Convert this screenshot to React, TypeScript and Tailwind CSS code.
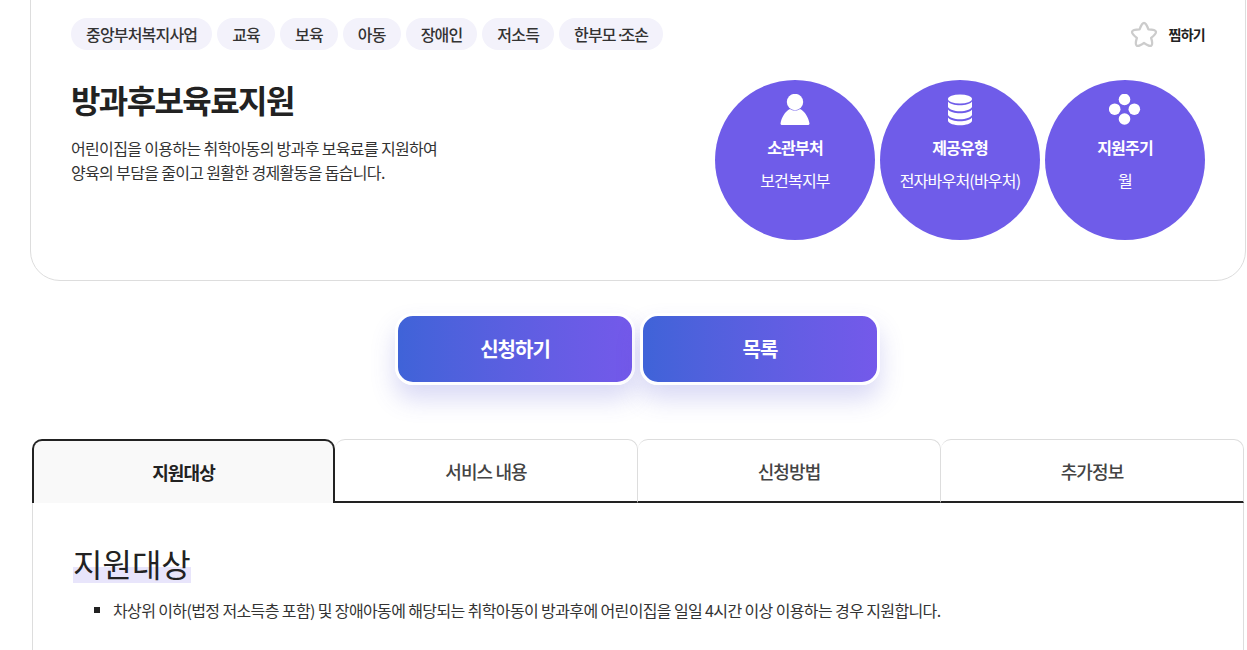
import React from 'react';

const chips: React.ReactNode[] = [
  '중앙부처복지사업',
  '교육',
  '보육',
  '아동',
  '장애인',
  '저소득',
  <>
    한부모<span className="tracking-[-4.5px]">·</span>조손
  </>,
];
const tabs = ['지원대상', '서비스 내용', '신청방법', '추가정보'];

const StarIcon = () => (
  <svg width="28" height="28" viewBox="0 0 28 28" fill="none" stroke="#cccccc" strokeWidth="2.3" strokeLinejoin="round">
    <path d="M9.59 9.43Q14-3.43 18.41 9.43 32 9.65 21.13 17.82 25.13 30.81 14 23 2.87 30.81 6.87 17.82-4 9.65 9.59 9.43z" />
  </svg>
);

const PersonIcon = () => (
  <svg width="32" height="32" viewBox="0 0 32 32" fill="#fff">
    <circle cx="16" cy="8" r="8.2" />
    <path d="M11 15c-5 2.5-8.5 8.5-9.5 14.5 0 1 .8 1.5 2 1.5h25c1.2 0 2-.5 2-1.5-1-6-4.5-12-9.5-14.5-3 2-7 2-10 0z" />
  </svg>
);

const DatabaseIcon = () => (
  <svg width="26" height="32" viewBox="0 0 26 32" fill="#fff">
    <ellipse cx="13" cy="5" rx="12" ry="4.5" />
    <path d="M1 7.5c2 2.5 6.5 3.7 12 3.7s10-1.2 12-3.7V13c-1.5 2.7-6 4.2-12 4.2S2.5 15.700 1 13z" />
    <path d="M1 15.500c2 2.500 6.500 3.700 12 3.700s10-1.200 12-3.700V21c-1.500 2.700-6 4.200-12 4.200S2.500 23.700 1 21z" />
    <path d="M1 23.500c2 2.500 6.500 3.700 12 3.700s10-1.200 12-3.700V27c-1 2.800-6 4.200-12 4.200S2 29.800 1 27z" />
  </svg>
);

const DotsIcon = () => (
  <svg width="32" height="32" viewBox="0 0 32 32" fill="#fff">
    <circle cx="15.5" cy="5.5" r="5.8" />
    <circle cx="5.7" cy="15.2" r="5.8" />
    <circle cx="25.3" cy="15.2" r="5.8" />
    <circle cx="15.5" cy="25" r="5.8" />
  </svg>
);

const infos = [
  { icon: <PersonIcon />, title: '소관부처', value: '보건복지부' },
  { icon: <DatabaseIcon />, title: '제공유형', value: '전자바우처(바우처)' },
  { icon: <DotsIcon />, title: '지원주기', value: '월' },
];

const App: React.FC = () => {
  return (
    <div className="h-[650px] overflow-hidden bg-white font-['Noto_Sans_CJK_KR','Noto_Sans',sans-serif] text-[#222]">
      <div className="ml-[30px] mr-[1px] -mt-[20px] h-[301px] rounded-b-[30px] border border-[#ddd] px-[40px] pt-[37px]">
        <div className="flex items-center justify-between">
          <ul className="flex gap-[5px]">
            {chips.map((chip, i) => (
              <li key={i} className="flex h-[32px] items-center rounded-full bg-[#f3f2fb] px-[15px] text-[16px] font-medium tracking-[-0.82px] text-[#333]">
                <span>{chip}</span>
              </li>
            ))}
          </ul>
          <div className="flex items-center gap-[10px]">
            <StarIcon />
            <span className="text-[14px] font-bold tracking-[-0.7px]">찜하기</span>
          </div>
        </div>
        <div className="mt-[12px] flex justify-between">
          <div className="pt-[14px]">
            <h2 className="text-[32px] font-bold leading-[46px] tracking-[-1.6px]">방과후보육료지원</h2>
            <p className="mt-[14px] text-[16px] leading-[24px] tracking-[-0.66px] text-[#333]">
              어린이집을 이용하는 취학아동의 방과후 보육료를 지원하여
              <br />
              양육의 부담을 줄이고 원활한 경제활동을 돕습니다.
            </p>
          </div>
          <div className="mt-[18px] flex gap-[5px]">
            {infos.map((info) => (
              <div key={info.title} className="flex h-[160px] w-[160px] flex-col items-center rounded-full bg-[#6f5ce9] pt-[14px] text-white">
                <div className="flex h-[32px] items-center justify-center">{info.icon}</div>
                <strong className="mt-[9px] text-[16px] font-bold leading-[24px] tracking-[-0.8px]">{info.title}</strong>
                <span className="mt-[10px] text-[16px] leading-[22px] tracking-[-0.8px]">{info.value}</span>
              </div>
            ))}
          </div>
        </div>
      </div>

      <div className="ml-[30px] mr-[2px] mt-[32px] flex justify-center gap-[5px]">
        {['신청하기', '목록'].map((label) => (
          <button
            key={label}
            className="h-[72px] w-[240px] rounded-[18px] border-[3px] border-white bg-gradient-to-r from-[#3f63d8] to-[#7459ea] text-[20px] font-bold tracking-[-1px] text-white shadow-[0_14px_24px_rgba(80,80,210,0.22)]"
          >
            {label}
          </button>
        ))}
      </div>

      <div className="ml-[32px] mr-[3px] mt-[54px]">
        <ul className="grid h-[64px] grid-cols-4">
          {tabs.map((tab, i) => (
            <li
              key={tab}
              className={
                i === 0
                  ? 'flex items-center justify-center rounded-t-[10px] border-2 border-b-0 border-[#222] bg-[#f9f9f9] text-[18px] font-bold tracking-[-0.9px] text-[#222]'
                  : 'flex items-center justify-center rounded-t-[10px] border border-b-[2px] border-l-0 border-[#ddd] border-b-[#222] pt-[2px] text-[18px] font-medium tracking-[-0.9px] text-[#444]'
              }
            >
              {tab}
            </li>
          ))}
        </ul>
        <div className="h-[200px] border-x border-[#ddd] px-[40px] pt-[40px]">
          <h3 className="inline-block bg-[linear-gradient(transparent_60%,#e8e5fb_60%)] text-[32px] font-normal leading-[40px] text-[#222]">
            지원대상
          </h3>
          <ul className="mt-[15px]">
            <li className="flex items-center text-[16px] leading-[24px] tracking-[-0.62px] text-[#333]">
              <span className="ml-[21px] mr-[13px] h-[6px] w-[6px] bg-[#222]" />
              차상위 이하(법정 저소득층 포함) 및 장애아동에 해당되는 취학아동이 방과후에 어린이집을 일일 4시간 이상 이용하는 경우 지원합니다.
            </li>
          </ul>
        </div>
      </div>
    </div>
  );
};

export default App;
